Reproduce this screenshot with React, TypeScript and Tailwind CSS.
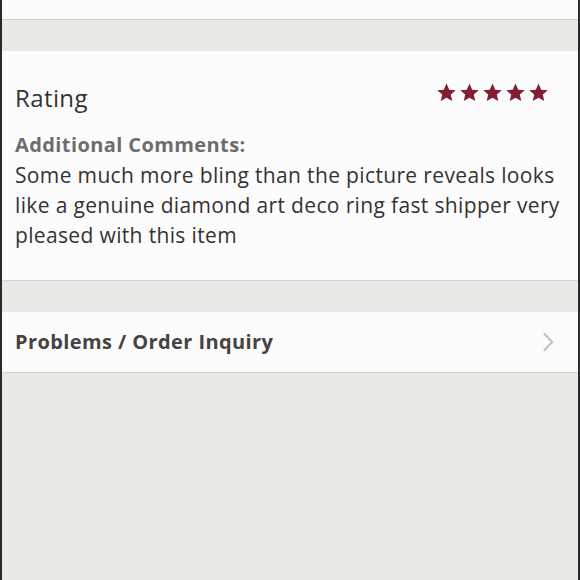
import React from "react";

function Star() {
  return (
    <svg viewBox="0 0 24 24" className="h-[21px] w-[21px]" fill="#7f1f31">
      <path d="M12 1.8l3.1 7 7.5.6-5.7 5 1.7 7.4L12 17.9l-6.6 3.9 1.7-7.4-5.7-5 7.5-.6z" />
    </svg>
  );
}

function Chevron() {
  return (
    <svg viewBox="0 0 16 24" className="h-[22px] w-[15px]" fill="none" stroke="#c4c4c6" strokeWidth="2.4">
      <path d="M3 2.5l9 9.5-9 9.5" />
    </svg>
  );
}

export default function App() {
  return (
    <div
      className="flex h-[580px] w-full flex-col overflow-hidden border-x-2 border-[#2a2a2a] bg-[#ebe9e6] text-[#333]"
      style={{ fontFamily: "'Open Sans', sans-serif" }}
    >
      <div className="h-[20px] shrink-0 border-b border-[#cfcdca] bg-[#fdfcfc]" />
      <div className="h-[31px] shrink-0" />

      <section className="shrink-0 border-b border-[#d6d4d1] bg-[#fdfcfc] px-[13px] pb-[30px] pt-[31px]">
        <div className="flex items-start justify-between">
          <h2 className="pt-[1px] text-[24px] leading-[30px] tracking-[0.4px] text-[#333]">Rating</h2>
          <div className="mr-[16px] flex gap-[2px]">
            <Star />
            <Star />
            <Star />
            <Star />
            <Star />
          </div>
        </div>
        <div className="mt-[17px] text-[20px] font-bold leading-[30px] tracking-[0.4px] text-[#6d6d6d]">
          Additional Comments:
        </div>
        <p className="text-[21px] leading-[30px] tracking-[0.35px] text-[#333]">
          Some much more bling than the picture reveals looks like a genuine diamond art deco ring fast shipper very
          pleased with this item
        </p>
      </section>

      <div className="h-[31px] shrink-0" />

      <button
        type="button"
        className="flex h-[61px] shrink-0 items-center justify-between border-b border-[#d6d4d1] bg-[#fdfcfc] pl-[13px] pr-[22px] text-left"
      >
        <span className="text-[20px] font-bold tracking-[0.4px] text-[#444]">Problems / Order Inquiry</span>
        <Chevron />
      </button>
    </div>
  );
}
